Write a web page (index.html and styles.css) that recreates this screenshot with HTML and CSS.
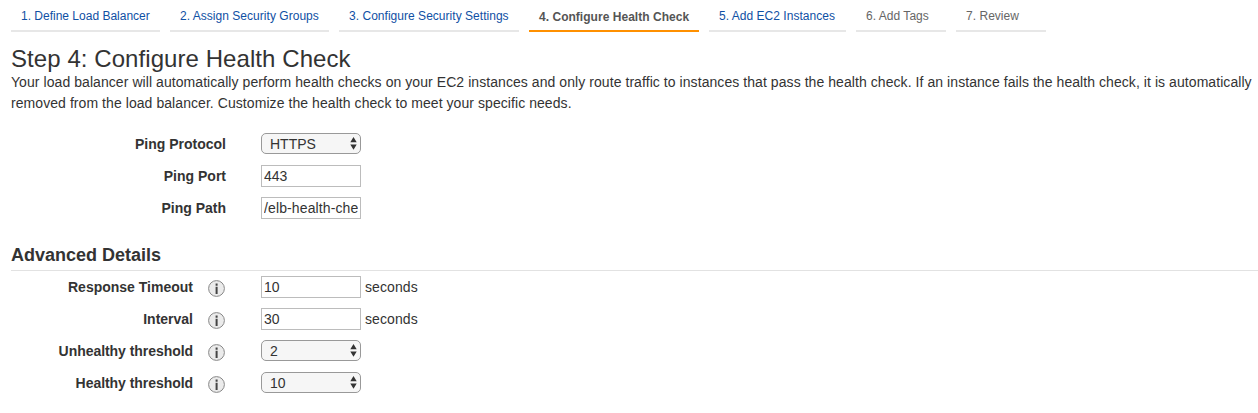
FILE: index.html
```html
<!DOCTYPE html>
<html lang="en">
<head>
<meta charset="utf-8">
<title>Configure Health Check</title>
<link rel="stylesheet" href="styles.css">
</head>
<body>
<nav class="steps">
  <a class="step step-1"><span>1. Define Load Balancer</span></a>
  <a class="step step-2"><span>2. Assign Security Groups</span></a>
  <a class="step step-3"><span>3. Configure Security Settings</span></a>
  <a class="step step-4 active"><span>4. Configure Health Check</span></a>
  <a class="step step-5"><span>5. Add EC2 Instances</span></a>
  <a class="step step-6 pending"><span>6. Add Tags</span></a>
  <a class="step step-7 pending"><span>7. Review</span></a>
</nav>
<main>
  <h1><span>Step 4: Configure Health Check</span></h1>
  <p class="intro"><span class="line">Your load balancer will automatically perform health checks on your EC2 instances and only route traffic to instances that pass the health check. If an instance fails the health check, it is automatically</span> <span class="line">removed from the load balancer. Customize the health check to meet your specific needs.</span></p>
  <form class="ping">
    <div class="row">
      <label class="label">Ping Protocol</label>
      <div class="select"><select><option>HTTPS</option></select><svg class="arrows" viewBox="0 0 7 13"><path d="M3.5 0L6.7 5.3H.3zM.3 7.5H6.7L3.5 12.8z"/></svg></div>
    </div>
    <div class="row">
      <label class="label">Ping Port</label>
      <input class="field" type="text" value="443">
    </div>
    <div class="row">
      <label class="label">Ping Path</label>
      <input class="field path" type="text" value="/elb-health-check">
    </div>
  </form>
  <h2><span>Advanced Details</span></h2>
  <form class="advanced">
    <div class="row">
      <label class="label">Response Timeout</label>
      <svg class="info" viewBox="0 0 17 17"><circle cx="8.5" cy="8.5" r="7.9"/><path d="M7.6 3.6h2v2.2h-2zM7.6 6.8h2V14h-2z"/></svg>
      <input class="field" type="text" value="10"><span class="unit">seconds</span>
    </div>
    <div class="row">
      <label class="label">Interval</label>
      <svg class="info" viewBox="0 0 17 17"><circle cx="8.5" cy="8.5" r="7.9"/><path d="M7.6 3.6h2v2.2h-2zM7.6 6.8h2V14h-2z"/></svg>
      <input class="field" type="text" value="30"><span class="unit">seconds</span>
    </div>
    <div class="row">
      <label class="label tight">Unhealthy threshold</label>
      <svg class="info" viewBox="0 0 17 17"><circle cx="8.5" cy="8.5" r="7.9"/><path d="M7.6 3.6h2v2.2h-2zM7.6 6.8h2V14h-2z"/></svg>
      <div class="select"><select><option>2</option></select><svg class="arrows" viewBox="0 0 7 13"><path d="M3.5 0L6.7 5.3H.3zM.3 7.5H6.7L3.5 12.8z"/></svg></div>
    </div>
    <div class="row">
      <label class="label tight">Healthy threshold</label>
      <svg class="info" viewBox="0 0 17 17"><circle cx="8.5" cy="8.5" r="7.9"/><path d="M7.6 3.6h2v2.2h-2zM7.6 6.8h2V14h-2z"/></svg>
      <div class="select"><select><option>10</option></select><svg class="arrows" viewBox="0 0 7 13"><path d="M3.5 0L6.7 5.3H.3zM.3 7.5H6.7L3.5 12.8z"/></svg></div>
    </div>
  </form>
</main>
</body>
</html>
```
FILE: styles.css
```css
* { box-sizing: border-box; }
body {
  margin: 0;
  padding-left: 11px;
  height: 413px;
  overflow: hidden;
  background: #fff;
  color: #333;
  font: 14px/21px "Liberation Sans", Arial, sans-serif;
}
.steps { display: flex; gap: 10px; height: 32px; }
.step {
  flex: none;
  height: 32px;
  padding: 6px 0 0 10px;
  border-bottom: 2px solid #e7e7e7;
  color: #0f50a4;
  font-size: 12px;
  line-height: 20px;
  letter-spacing: 0.03px;
  white-space: nowrap;
}
.step-1 { width: 149px; letter-spacing: 0; }
.step-2 { width: 159px; }
.step-3 { width: 180px; }
.step-4 { width: 170px; }
.step-5 { width: 137px; }
.step-6, .step-7 { width: 90px; }
.step.active { padding-top: 7px; border-color: #ff9000; color: #555; font-weight: bold; }
.step.pending { color: #666; }
h1 { margin: 12px 0 0; height: 28px; font-size: 24px; line-height: 30px; font-weight: normal; letter-spacing: 0.07px; }
.intro { margin: 0; height: 42px; letter-spacing: 0.066px; }
.line { display: block; white-space: nowrap; }
.ping { margin-top: 14px; }
.row { display: flex; align-items: flex-start; height: 32px; padding-top: 5px; }
.label { flex: none; width: 215px; margin-right: 35px; text-align: right; font-weight: bold; line-height: 22px; white-space: nowrap; }
.advanced .label { width: 182px; margin-right: 15px; }
.label.tight { letter-spacing: -0.05px; }
.info { flex: none; width: 17px; height: 17px; margin: 4px 36px 0 0; }
.info circle { fill: #ebebeb; stroke: #888; stroke-width: 1; }
.info path { fill: #444; }
.field {
  width: 100px;
  height: 22px;
  margin: 0;
  padding: 0 2px;
  border: 1px solid #bcbcbc;
  border-radius: 0;
  background: #fff;
  color: #333;
  font: inherit;
}
.field.path { letter-spacing: 0.12px; }
.select { position: relative; width: 100px; height: 21px; }
.select select {
  display: block;
  appearance: none;
  width: 100px;
  height: 21px;
  margin: 0;
  padding: 0 18px 3px 8px;
  border: 1px solid #999;
  border-radius: 5px;
  background: #f6f6f6;
  color: #333;
  font: inherit;
}
.arrows { position: absolute; right: 4.5px; top: 4px; width: 7px; height: 13px; fill: #333; }
.unit { margin-left: 4px; line-height: 22px; letter-spacing: 0.1px; }
h2 {
  margin: 20px 0 0;
  height: 27px;
  border-bottom: 1px solid #e2e2e2;
  font-size: 18px;
  line-height: 22px;
}
```
